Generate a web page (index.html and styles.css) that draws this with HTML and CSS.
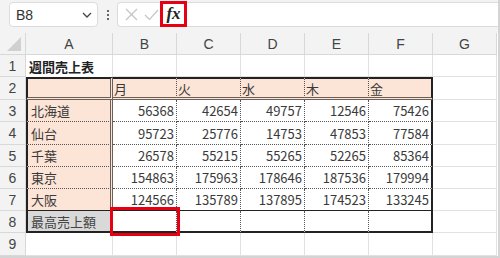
FILE: index.html
```html
<!DOCTYPE html>
<html lang="ja">
<head>
    <meta charset="UTF-8">
    <meta name="viewport" content="width=device-width, initial-scale=1.0">
    <title>週間売上表</title>
    <link rel="stylesheet" href="styles.css">
</head>
<body>
    <div class="sheet">
        <!-- 数式バー -->
        <div class="toolbar">
            <div class="namebox">
                <span>B8</span>
                <svg class="chev" width="10" height="6" viewBox="0 0 10 6"><path d="M1 1 L5 5 L9 1" fill="none" stroke="#444" stroke-width="1.3"/></svg>
            </div>
            <div class="dots"><i></i><i></i><i></i></div>
            <div class="formula">
                <svg class="icon x" width="13" height="13" viewBox="0 0 13 13"><path d="M1 1 L12 12 M12 1 L1 12" stroke="#c4c4c4" stroke-width="1.2"/></svg>
                <svg class="icon ok" width="15" height="12" viewBox="0 0 15 12"><path d="M1 6 L5.5 10.5 L14 1" fill="none" stroke="#c4c4c4" stroke-width="1.2"/></svg>
                <div class="fx">fx</div>
                <div class="input"></div>
            </div>
        </div>

        <!-- シート -->
        <div class="grid">
            <div class="rh corner"><span class="tri"></span></div>
            <div class="ch">A</div><div class="ch">B</div><div class="ch">C</div><div class="ch">D</div><div class="ch">E</div><div class="ch">F</div><div class="ch">G</div>

            <div class="rh">1</div>
            <div class="cell title">週間売上表</div><div class="cell"></div><div class="cell"></div><div class="cell"></div><div class="cell"></div><div class="cell"></div><div class="cell"></div>

            <div class="rh">2</div>
            <div class="cell lbl top"></div>
            <div class="cell day top">月</div><div class="cell day top">火</div><div class="cell day top">水</div><div class="cell day top">木</div><div class="cell day top last">金</div>
            <div class="cell"></div>

            <div class="rh">3</div>
            <div class="cell lbl">北海道</div>
            <div class="cell num">56368</div><div class="cell num">42654</div><div class="cell num">49757</div><div class="cell num">12546</div><div class="cell num last">75426</div>
            <div class="cell"></div>

            <div class="rh">4</div>
            <div class="cell lbl">仙台</div>
            <div class="cell num">95723</div><div class="cell num">25776</div><div class="cell num">14753</div><div class="cell num">47853</div><div class="cell num last">77584</div>
            <div class="cell"></div>

            <div class="rh">5</div>
            <div class="cell lbl">千葉</div>
            <div class="cell num">26578</div><div class="cell num">55215</div><div class="cell num">55265</div><div class="cell num">52265</div><div class="cell num last">85364</div>
            <div class="cell"></div>

            <div class="rh">6</div>
            <div class="cell lbl">東京</div>
            <div class="cell num">154863</div><div class="cell num">175963</div><div class="cell num">178646</div><div class="cell num">187536</div><div class="cell num last">179994</div>
            <div class="cell"></div>

            <div class="rh">7</div>
            <div class="cell lbl r7">大阪</div>
            <div class="cell num r7">124566</div><div class="cell num r7">135789</div><div class="cell num r7">137895</div><div class="cell num r7">174523</div><div class="cell num last r7">133245</div>
            <div class="cell"></div>

            <div class="rh">8</div>
            <div class="cell lbl gray r8">最高売上額</div>
            <div class="cell num r8"></div><div class="cell num r8"></div><div class="cell num r8"></div><div class="cell num r8"></div><div class="cell num last r8"></div>
            <div class="cell"></div>

            <div class="rh">9</div>
            <div class="cell"></div><div class="cell"></div><div class="cell"></div><div class="cell"></div><div class="cell"></div><div class="cell"></div><div class="cell"></div>
        </div>

        <div class="mark"></div>
    </div>
</body>
</html>
```

FILE: styles.css
```css
* {
    margin: 0;
    padding: 0;
    box-sizing: border-box;
}

body {
    font-family: "Noto Sans CJK JP", "Noto Sans", sans-serif;
    background: #ffffff;
    color: #333;
}

.sheet {
    position: relative;
    width: 500px;
    height: 258px;
    overflow: hidden;
    background: #fff;
    border-right: 2px solid #d4d4d4;
    border-bottom: 2px solid #d4d4d4;
}

/* 数式バー */
.toolbar {
    height: 33px;
    background: #f3f3f3;
    display: flex;
    align-items: flex-start;
    padding-top: 2px;
    padding-left: 9px;
}

.namebox {
    width: 89px;
    height: 25px;
    background: #fff;
    border: 1px solid #dcdcdc;
    border-radius: 4px;
    display: flex;
    align-items: center;
    justify-content: space-between;
    padding: 0 5px 0 6px;
    font-family: "Liberation Sans", Arial, sans-serif;
    font-size: 14px;
    color: #333;
}

.dots {
    width: 19px;
    height: 25px;
    display: flex;
    flex-direction: column;
    align-items: center;
    justify-content: center;
    gap: 2px;
}

.dots i {
    display: block;
    width: 2px;
    height: 2px;
    background: #666;
}

.formula {
    flex: 1;
    height: 25px;
    background: #fff;
    border: 1px solid #dcdcdc;
    border-right: none;
    border-radius: 4px 0 0 4px;
    display: flex;
    align-items: center;
    padding-left: 7px;
}

.formula .x {
    margin-right: 6px;
}

.formula .ok {
    margin-right: 1px;
}

.fx {
    width: 27px;
    height: 26px;
    margin-top: -2px;
    border: 3px solid #e60012;
    display: flex;
    align-items: center;
    justify-content: center;
    font-family: "Liberation Serif", "Times New Roman", serif;
    font-style: italic;
    font-weight: bold;
    font-size: 17px;
    color: #222;
}

.input {
    flex: 1;
}

/* シート */
.grid {
    display: grid;
    grid-template-columns: 26px 87px repeat(6, 64px);
    grid-template-rows: 22px 22px 23px 22px 23px 22px 22px 22px 22px 23px;
    font-size: 13px;
}

.rh, .ch {
    background: #f3f3f3;
    color: #444;
    font-family: "Liberation Sans", Arial, sans-serif;
    font-size: 14px;
    display: flex;
    align-items: center;
    justify-content: center;
    border-right: 1px solid #d8d8d8;
    border-bottom: 1px solid #d8d8d8;
}

.corner {
    position: relative;
}

.tri {
    position: absolute;
    right: 4px;
    bottom: 3px;
    width: 0;
    height: 0;
    border-left: 14px solid transparent;
    border-bottom: 14px solid #d0d0d0;
}

.cell {
    display: flex;
    align-items: center;
    padding: 0 3px;
    white-space: nowrap;
    overflow: hidden;
    color: #3a3a3a;
    border-right: 1px solid #e1e1e1;
    border-bottom: 1px solid #e1e1e1;
}

.title {
    font-weight: bold;
    color: #222;
    overflow: visible;
    border-bottom: none;
}

/* 表の罫線 */
.lbl {
    background: #fce4d6;
    border-left: 2px solid #222;
    border-right: 3px double #6b6058;
    border-bottom: 1px dotted #555;
    padding-left: 3px;
}

.gray {
    background: #d9d9d9;
    color: #444;
}

.top {
    border-top: 2px solid #222;
    border-bottom: 3px double #6b6058;
}

.day {
    background: #fce4d6;
    border-right: 1px dotted #555;
    padding-left: 1px;
}

.num {
    justify-content: flex-end;
    padding-right: 2px;
    border-right: 1px dotted #555;
    border-bottom: 1px dotted #555;
}

.cell.last {
    border-right: 2px solid #222;
}

.r7 {
    border-bottom: 1px solid #222;
}

.r8 {
    border-bottom: 2px solid #222;
}

/* 選択セルの枠 */
.mark {
    position: absolute;
    left: 110px;
    top: 207px;
    width: 70px;
    height: 29px;
    border: 3px solid #e60012;
}
```
